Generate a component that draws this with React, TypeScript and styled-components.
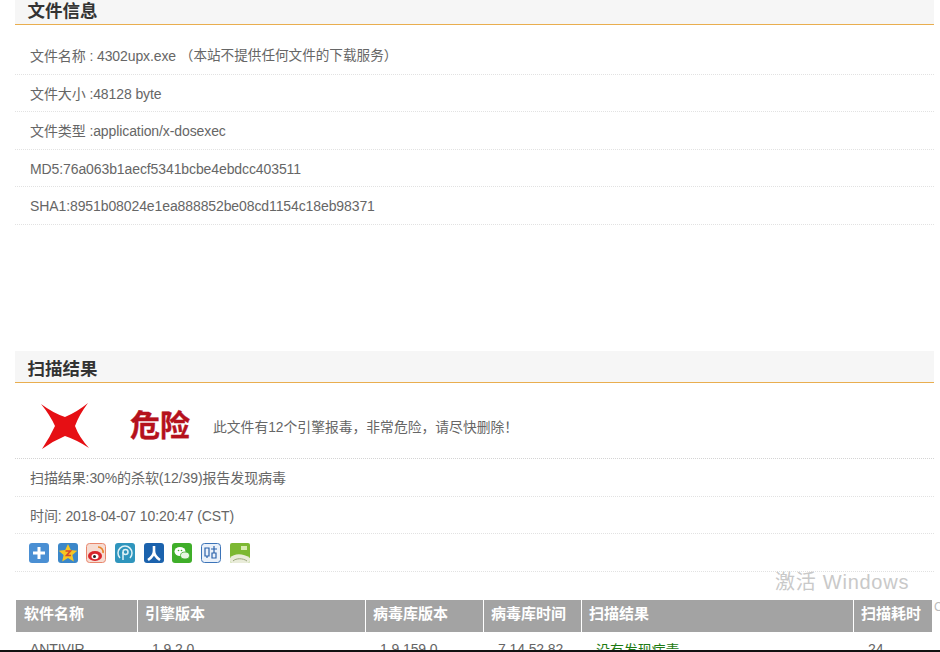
import styled, { createGlobalStyle } from "styled-components";

const GlobalStyle = createGlobalStyle`
  html, body {
    margin: 0;
    padding: 0;
    background: #fff;
    overflow: hidden;
  }
`;

const Page = styled.div`
  position: relative;
  width: 940px;
  height: 652px;
  overflow: hidden;
  padding: 0 6px 0 15px;
  box-sizing: border-box;
  font-family: "Liberation Sans", "Noto Sans CJK SC", sans-serif;
  font-size: 14px;
  letter-spacing: -0.1px;
  color: #666;
`;

const Header = styled.h2<{ $height: number }>`
  margin: 0;
  height: ${(p) => p.$height}px;
  box-sizing: border-box;
  display: flex;
  align-items: flex-end;
  padding: 0 0 1px 12.5px;
  background: #f6f6f6;
  border-bottom: 1px solid #e9ae4f;
  font-size: 17.5px;
  line-height: 24px;
  font-weight: 700;
  letter-spacing: 0;
  color: #333;
`;

const InfoList = styled.div`
  height: 326px;
  padding-top: 12px;
  box-sizing: border-box;
`;

const Row = styled.div`
  height: 37.5px;
  box-sizing: border-box;
  padding: 2px 0 0 15px;
  display: flex;
  align-items: center;
  line-height: 20px;
  border-bottom: 1px dotted #e2e2e2;
  white-space: pre;
`;

const Notice = styled.span`
  font-size: 13.6px;
  letter-spacing: 0;
`;

const VerdictRow = styled.div`
  height: 76px;
  box-sizing: border-box;
  display: flex;
  align-items: center;
  padding: 10px 0 0 25px;
  border-bottom: 1px dotted #d4d4d4;
`;

const DangerLabel = styled.span`
  margin: 0 23px 0 40px;
  font-size: 30px;
  line-height: 36px;
  font-weight: 700;
  letter-spacing: 0;
  color: #b5111c;
  -webkit-text-stroke: 0.4px #b5111c;
`;

const VerdictText = styled.span`
  font-size: 13.8px;
  letter-spacing: 0;
`;

const ShareRow = styled.div`
  height: 38px;
  box-sizing: border-box;
  display: flex;
  align-items: center;
  gap: 8.7px;
  padding: 0 0 0 14px;
  border-bottom: 1px dotted #e2e2e2;
`;

const ResultTable = styled.table`
  margin: 28px 0 0 1px;
  width: 917px;
  table-layout: fixed;
  border-collapse: separate;
  border-spacing: 0;
`;

const Th = styled.th<{ $width: number }>`
  width: ${(p) => p.$width}px;
  height: 32px;
  box-sizing: border-box;
  padding: 0 0 4px 7px;
  background: #a3a3a3;
  border-right: 1px solid #fff;
  color: #fff;
  font-size: 15px;
  line-height: 20px;
  font-weight: 700;
  letter-spacing: 0;
  text-align: left;
  white-space: nowrap;

  &:first-child {
    padding-left: 8px;
  }
`;

const Td = styled.td<{ $clean?: boolean }>`
  height: 34px;
  padding: 0 0 0 14px;
  color: ${(p) => (p.$clean ? "#1d7a12" : "#666")};
  white-space: nowrap;
  vertical-align: middle;
`;

const Watermark = styled.div`
  position: absolute;
  left: 775px;
  top: 570px;
  font-size: 20px;
  line-height: 24px;
  letter-spacing: 0.75px;
  color: #c9c9c9;
`;

const EdgeMark = styled.div`
  position: absolute;
  left: 934px;
  top: 600px;
  font-size: 12px;
  color: #bbb;
`;

const BottomEdge = styled.div`
  position: absolute;
  left: 0;
  right: 0;
  bottom: 0;
  height: 2px;
  background: #111;
`;

function DangerIcon() {
  return (
    <svg width="50" height="46" viewBox="0 0 50 46">
      <path
        d="M1 1 Q13 10 25 14 Q37 9 48 0 Q39 12 35 23 Q39 34 49 45 Q37 37 25 33 Q13 38 2 46 Q10 34 15 23 Q10 12 1 1 Z"
        fill="#e60f14"
      />
    </svg>
  );
}

const shareIcons = [
  <>
    <rect width="20" height="20" rx="3" fill="#4a8fd3" />
    <path d="M10 4v12M4 10h12" stroke="#fff" strokeWidth="3" />
  </>,
  <>
    <rect width="20" height="20" rx="3" fill="#3b87c9" />
    <path d="M10 1l2.800 6 6.500.7-4.900 4.300 1.400 6.500-5.800-3.400-5.800 3.400 1.400-6.500L.7 7.700 7.200 7z" fill="#f6c622" />
    <path d="M7.500 8h5l-4 4.500h4.500" fill="none" stroke="#d9472b" strokeWidth="1.600" />
  </>,
  <>
    <rect x=".5" y=".5" width="19" height="19" rx="3" fill="#f6dcd2" stroke="#e8866c" />
    <ellipse cx="9" cy="13" rx="7" ry="5" fill="#d8262c" />
    <ellipse cx="9" cy="13.500" rx="3.500" ry="2.800" fill="#fff" />
    <circle cx="8.500" cy="13.500" r="1.500" fill="#222" />
    <path d="M12 4a5 5 0 0 1 5 6" fill="none" stroke="#e8862a" strokeWidth="1.600" />
  </>,
  <>
    <rect width="20" height="20" rx="3" fill="#2f95bd" />
    <path d="M5 15a7 7 0 1 1 10 0" fill="none" stroke="#dff1f6" strokeWidth="1.500" />
    <circle cx="10.500" cy="9" r="2.500" fill="none" stroke="#dff1f6" strokeWidth="1.500" />
    <path d="M8 9v8" stroke="#dff1f6" strokeWidth="1.500" />
  </>,
  <>
    <rect width="20" height="20" rx="3" fill="#1b62ad" />
    <path d="M10 3v5c0 4-3 7-6 9M10 8c0 4 3 7 6 9" fill="none" stroke="#fff" strokeWidth="2.600" />
  </>,
  <>
    <rect width="20" height="20" rx="3" fill="#3fae29" />
    <ellipse cx="8" cy="8.500" rx="5.500" ry="4.500" fill="#fff" />
    <ellipse cx="13" cy="12.500" rx="4.500" ry="3.500" fill="#e8f5e2" stroke="#3fae29" strokeWidth=".8" />
    <circle cx="6.500" cy="7.500" r=".8" fill="#3fae29" />
    <circle cx="9.500" cy="7.500" r=".8" fill="#3fae29" />
  </>,
  <>
    <rect x=".5" y=".5" width="19" height="19" rx="3" fill="#eaf1fa" stroke="#3c74b8" />
    <path d="M4 5h4v8H4zM6 13v2M10 6h6M13 3v7M11 10h4v5h-4z" fill="none" stroke="#2a62ab" strokeWidth="1.200" />
  </>,
  <>
    <rect width="20" height="20" rx="2" fill="#7cb832" />
    <rect x="11" y="3" width="6" height="4" fill="#d6ecae" />
    <path d="M0 15c4-5 13-5 20 0v3a2 2 0 0 1-2 2H2a2 2 0 0 1-2-2z" fill="#e9ecd9" />
    <path d="M3 18c3-3 10-3 14 0" fill="none" stroke="#9aa67c" />
  </>,
];

const columns = [
  { title: "软件名称", width: 122 },
  { title: "引擎版本", width: 228 },
  { title: "病毒库版本", width: 118 },
  { title: "病毒库时间", width: 98 },
  { title: "扫描结果", width: 272 },
  { title: "扫描耗时", width: 79 },
];

export default function App() {
  return (
    <>
      <GlobalStyle />
      <Page>
        <Header $height={25}>文件信息</Header>
        <InfoList>
          <Row>
            文件名称 : 4302upx.exe <Notice>（本站不提供任何文件的下载服务）</Notice>
          </Row>
          <Row>文件大小 :48128 byte</Row>
          <Row>文件类型 :application/x-dosexec</Row>
          <Row>MD5:76a063b1aecf5341bcbe4ebdcc403511</Row>
          <Row>SHA1:8951b08024e1ea888852be08cd1154c18eb98371</Row>
        </InfoList>
        <Header $height={32}>扫描结果</Header>
        <VerdictRow>
          <DangerIcon />
          <DangerLabel>危险</DangerLabel>
          <VerdictText>此文件有12个引擎报毒，非常危险，请尽快删除！</VerdictText>
        </VerdictRow>
        <Row>扫描结果:30%的杀软(12/39)报告发现病毒</Row>
        <Row>时间: 2018-04-07 10:20:47 (CST)</Row>
        <ShareRow>
          {shareIcons.map((icon, i) => (
            <svg key={i} width="20" height="20" viewBox="0 0 20 20">
              {icon}
            </svg>
          ))}
        </ShareRow>
        <ResultTable>
          <thead>
            <tr>
              {columns.map((c) => (
                <Th key={c.title} $width={c.width}>
                  {c.title}
                </Th>
              ))}
            </tr>
          </thead>
          <tbody>
            <tr>
              <Td>ANTIVIR</Td>
              <Td>1.9.2.0</Td>
              <Td>1.9.159.0</Td>
              <Td>7.14.52.82</Td>
              <Td $clean>没有发现病毒</Td>
              <Td>24</Td>
            </tr>
          </tbody>
        </ResultTable>
        <Watermark>激活 Windows</Watermark>
        <EdgeMark>C</EdgeMark>
        <BottomEdge />
      </Page>
    </>
  );
}
